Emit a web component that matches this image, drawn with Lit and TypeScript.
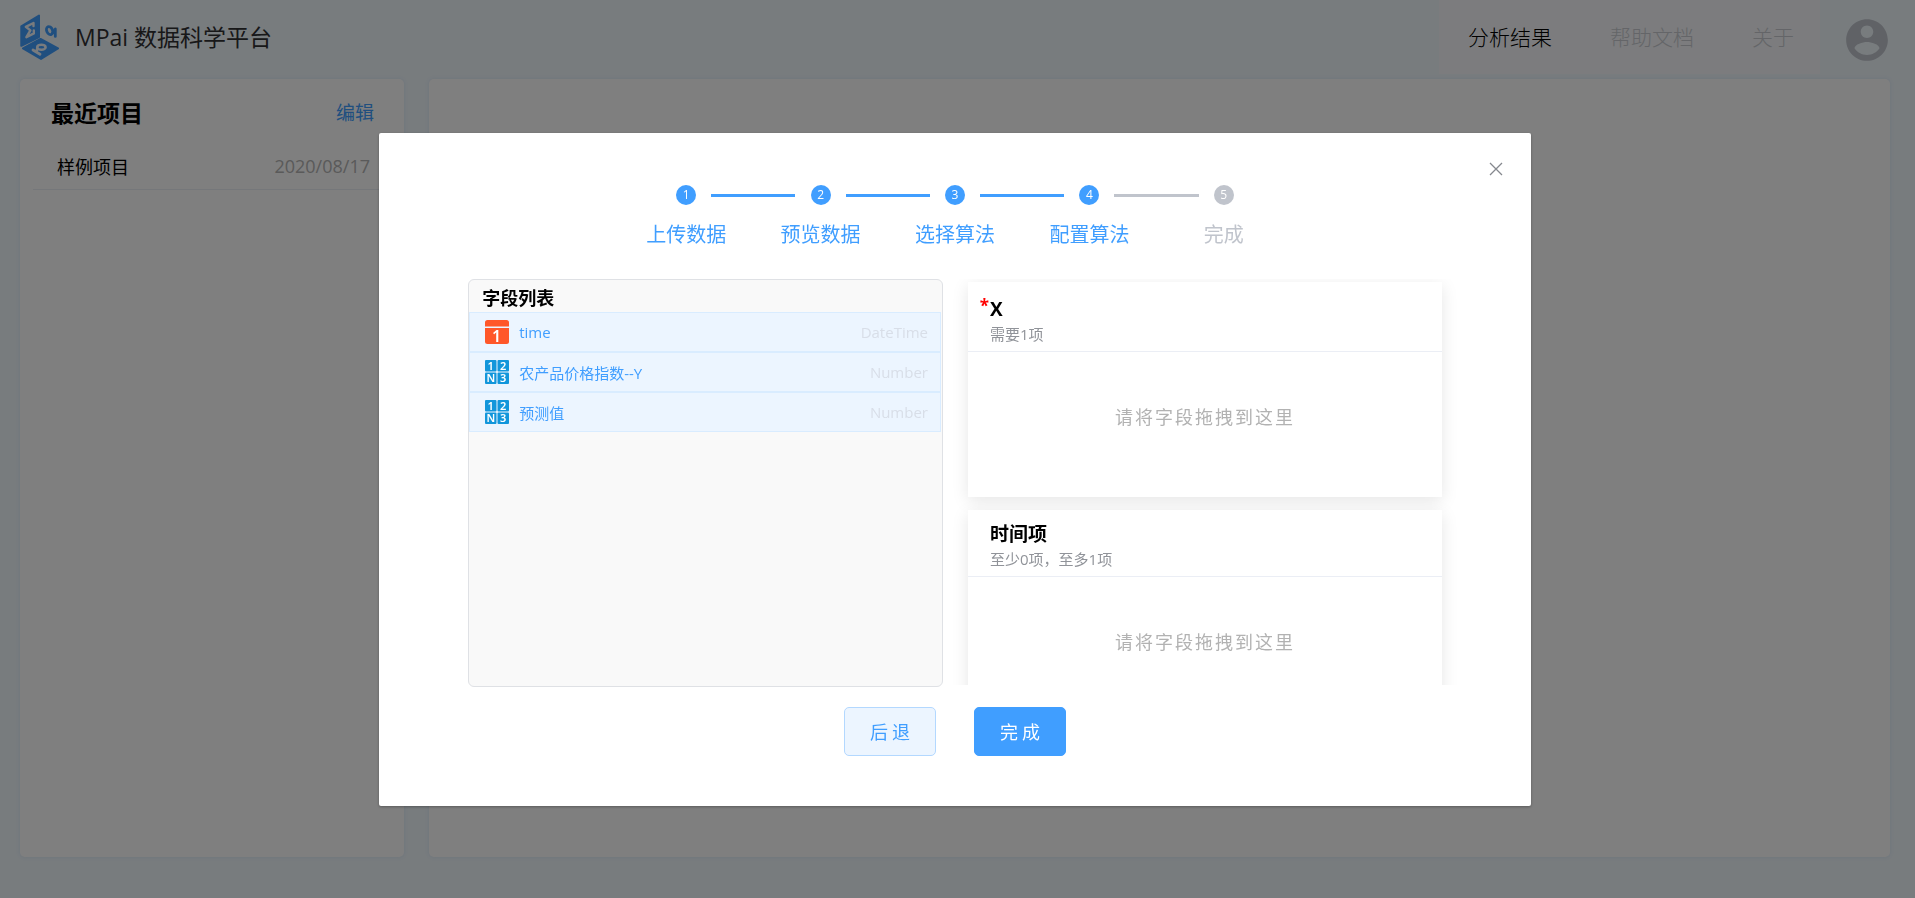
import { LitElement, html, svg, css } from "lit";
import { customElement, property, state } from "lit/decorators.js";

type FieldKind = "DateTime" | "Number";

interface Field {
  name: string;
  kind: FieldKind;
}

interface Slot {
  title: string;
  hint: string;
  required: boolean;
}

const STEPS = ["上传数据", "预览数据", "选择算法", "配置算法", "完成"];

const FIELDS: Field[] = [
  { name: "time", kind: "DateTime" },
  { name: "农产品价格指数--Y", kind: "Number" },
  { name: "预测值", kind: "Number" },
];

const SLOTS: Slot[] = [
  { title: "X", hint: "需要1项", required: true },
  { title: "时间项", hint: "至少0项，至多1项", required: false },
];

@customElement("brand-logo")
export class BrandLogo extends LitElement {
  static styles = css`
    :host {
      display: block;
      width: 40px;
      height: 46px;
    }
    .mark {
      display: block;
      width: 100%;
      height: 100%;
    }
  `;

  render() {
    return html`<svg class="mark" viewBox="0 0 40 46" aria-hidden="true">
      <g fill="#409eff" stroke="#409eff" stroke-width="2" stroke-linejoin="round">
        <path d="M1.3 12.3 L19 1.5 V23 L1.3 31.8 Z" />
        <path d="M3 34.5 L20.5 25 L38 34.5 L21 45 Z" />
      </g>
      <g fill="none" stroke="#f0f7fd" stroke-linecap="round" stroke-linejoin="round">
        <path stroke-width="2.4" d="M13.5 12 V9 L5.8 12.8 L10.4 16.4 L6.4 23.2 L13.8 19.4 V16.4" />
        <ellipse stroke-width="2.6" cx="21.4" cy="33.2" rx="4.2" ry="2.5" />
        <path stroke-width="2.8" d="M13 36 L20 40.2 M17.4 34.8 L16.4 37.6" />
      </g>
      <g fill="none" stroke="#409eff" stroke-width="2.8" stroke-linecap="round">
        <ellipse cx="29.6" cy="16.6" rx="2.9" ry="4.2" transform="rotate(-24 29.6 16.6)" />
        <path d="M32.6 19 L35.3 15 V22.4" stroke-linejoin="round" />
      </g>
    </svg>`;
  }
}

@customElement("field-icon")
export class FieldIcon extends LitElement {
  @property() kind: FieldKind = "Number";

  static styles = css`
    :host {
      display: block;
      width: 24px;
      height: 24px;
    }
    .glyph {
      display: block;
      overflow: visible;
      width: 100%;
      height: 100%;
      font-family: "Noto Sans", sans-serif;
      font-weight: 600;
      font-size: 11px;
      text-anchor: middle;
    }
    .day {
      font-size: 16px;
    }
  `;

  render() {
    if (this.kind === "DateTime") {
      return html`<svg class="glyph" viewBox="0 0 24 24" aria-hidden="true">
        <path fill="#ff5729" d="M2.5 0 H21.5 A2.5 2.5 0 0 1 24 2.5 V6.4 H0 V2.5 A2.5 2.5 0 0 1 2.5 0 Z" />
        <path fill="#ff5729" d="M0 8 H24 V21.5 A2.5 2.5 0 0 1 21.5 24 H2.5 A2.5 2.5 0 0 1 0 21.5 Z" />
        <text class="day" x="11.5" y="22" fill="#fff">1</text>
      </svg>`;
    }
    const cells: [number, number, string][] = [
      [0, 0, "1"],
      [12.5, 0, "2"],
      [0, 12.5, "N"],
      [12.5, 12.5, "3"],
    ];
    return html`<svg class="glyph" viewBox="0 0 24 24" aria-hidden="true">
      ${cells.map(
        ([x, y, label]) => svg`
          <rect x=${x} y=${y} width="11.5" height="11.5" rx="1" fill="#1296db" />
          <text x=${x + 5.75} y=${y + 9.6} fill="#fff">${label}</text>`
      )}
    </svg>`;
  }
}

@customElement("step-bar")
export class StepBar extends LitElement {
  @property({ type: Array }) steps: string[] = [];
  @property({ type: Number }) done = 0;

  static styles = css`
    :host {
      display: block;
    }
    .steps {
      display: grid;
      grid-auto-flow: column;
      grid-auto-columns: 1fr;
      margin: 0;
      padding: 0;
      list-style: none;
    }
    .step {
      display: grid;
      grid-template-columns: 1fr 20px 1fr;
      align-items: center;
      row-gap: 15px;
      color: #c0c4cc;
    }
    .done {
      color: #409eff;
    }
    .dot {
      grid-column: 2;
      display: flex;
      align-items: center;
      justify-content: center;
      height: 20px;
      border-radius: 50%;
      background: currentColor;
    }
    .number {
      color: #fff;
      font-size: 12px;
      line-height: 20px;
    }
    .tail {
      height: 3px;
      margin-left: 15px;
      margin-right: -42px;
      background: currentColor;
    }
    .label {
      grid-column: 1 / -1;
      font-size: 20px;
      line-height: 30px;
      text-align: center;
      white-space: nowrap;
    }
    .line {
      color: #c0c4cc;
    }
  `;

  render() {
    return html`<ol class="steps">
      ${this.steps.map(
        (label, i) => html`<li class="step ${i < this.done ? "done" : ""}">
          <span class="dot"><span class="number">${i + 1}</span></span>
          ${i < this.steps.length - 1
            ? html`<span class="tail ${i + 1 < this.done ? "" : "line"}"></span>`
            : ""}
          <span class="label">${label}</span>
        </li>`
      )}
    </ol>`;
  }
}

@customElement("drop-card")
export class DropCard extends LitElement {
  @property() heading = "";
  @property() hint = "";
  @property({ type: Boolean }) required = false;

  static styles = css`
    :host {
      display: block;
      background: #fff;
      box-shadow: 0 4px 16px rgba(0, 0, 0, 0.1);
    }
    .head {
      padding: 10px 22px 6px;
      border-bottom: 1px solid #ebeef5;
    }
    .title {
      position: relative;
      margin: 0;
      font-size: 19px;
      line-height: 28px;
      font-weight: 700;
      color: #000;
    }
    .required {
      padding-top: 3px;
    }
    .star {
      position: absolute;
      right: 100%;
      top: 0;
      padding-right: 1px;
      font-size: 17px;
      line-height: 28px;
      color: #f00;
    }
    .hint {
      margin: 0;
      font-size: 15px;
      line-height: 22px;
      color: #909399;
    }
    .body {
      height: 92px;
      padding-top: 53px;
      font-size: 18px;
      line-height: 24px;
      letter-spacing: 2px;
      text-align: center;
      color: #b2b2b2;
    }
  `;

  render() {
    return html`<section>
      <header class="head">
        <h3 class="title ${this.required ? "required" : ""}">
          ${this.required ? html`<span class="star">*</span>` : ""}${this.heading}
        </h3>
        <p class="hint">${this.hint}</p>
      </header>
      <div class="body">请将字段拖拽到这里</div>
    </section>`;
  }
}

@customElement("app-root")
export class AppRoot extends LitElement {
  @state() private open = true;

  static styles = css`
    :host {
      display: block;
      font-family: "Open Sans", "Noto Sans CJK SC", sans-serif;
      color: #000;
    }
    button {
      font-family: inherit;
      cursor: pointer;
    }
    a {
      text-decoration: none;
    }
    .page {
      box-sizing: border-box;
      display: flex;
      flex-direction: column;
      min-height: 100vh;
      padding: 0 25px 41px 20px;
      background: #f0f8fd;
    }
    .top {
      display: flex;
      align-items: center;
      height: 79px;
    }
    .brand {
      margin: 0 auto 5px 15px;
      font-size: 23px;
      line-height: 32px;
      font-weight: 400;
      color: #303133;
    }
    .logo {
      margin-bottom: 5px;
    }
    .menu {
      display: flex;
      align-items: center;
      align-self: flex-start;
      gap: 58px;
      height: 74px;
      margin-right: 22px;
      padding: 0 26px 0 29px;
      background: #f8f9fc;
      font-size: 21px;
      line-height: 32px;
      font-weight: 300;
    }
    .link {
      color: #000;
    }
    .muted {
      color: #c8cbd1;
    }
    .avatar {
      display: block;
      padding: 0;
      border: 0;
      background: none;
    }
    .avatar-icon {
      display: block;
      width: 50px;
      height: 50px;
      margin-right: -2px;
      fill: #c0c4cc;
    }
    .columns {
      flex: 1;
      display: grid;
      grid-template-columns: 384fr 1461fr;
      gap: 25px;
    }
    .card {
      border-radius: 5px;
      background: #fff;
      box-shadow: 0 0 4px rgba(64, 120, 200, 0.12);
    }
    .recent {
      padding: 16px 13px;
    }
    .recent-head {
      display: flex;
      align-items: center;
      justify-content: space-between;
      padding: 0 17px 0 18px;
    }
    .recent-title {
      margin: 0;
      font-size: 23px;
      line-height: 36px;
      font-weight: 700;
    }
    .edit {
      padding: 0;
      border: 0;
      background: none;
      font-size: 19px;
      line-height: 32px;
      color: #409eff;
    }
    .projects {
      margin: 12px 0 0;
      padding: 0;
      list-style: none;
    }
    .project {
      display: flex;
      align-items: center;
      justify-content: space-between;
      height: 46px;
      padding: 0 21px 0 24px;
      border-bottom: 1px solid #ebeef5;
      font-size: 18px;
    }
    .project-link {
      color: #000;
    }
    .date {
      color: #b4b4b4;
    }
    .overlay {
      position: fixed;
      inset: 0;
      display: flex;
      justify-content: center;
      align-items: flex-start;
      box-sizing: border-box;
      padding: 133px 5px 0 0;
      background: rgba(0, 0, 0, 0.5);
    }
    .dialog {
      box-sizing: border-box;
      width: 60.3%;
      padding: 27px 26px 50px;
      border-radius: 2px;
      background: #fff;
      box-shadow: 0 1px 3px rgba(0, 0, 0, 0.3);
    }
    .dialog-top {
      display: flex;
      justify-content: flex-end;
    }
    .close {
      display: block;
      padding: 2px;
      border: 0;
      background: none;
    }
    .close-icon {
      display: block;
      width: 14px;
      height: 14px;
    }
    .content {
      display: grid;
      padding: 7px 48px 0;
    }
    .progress {
      justify-self: center;
      width: 672px;
      max-width: 100%;
    }
    .work {
      display: grid;
      grid-template-columns: 475fr 504fr;
      gap: 10px;
      height: 408px;
      margin-top: 29px;
      padding-left: 15px;
    }
    .fields {
      display: flex;
      flex-direction: column;
      border: 1px solid #dfe1e5;
      border-radius: 6px;
      background: #f9f9f9;
    }
    .fields-title {
      margin: 0;
      padding: 4px 13px 0;
      font-size: 18px;
      line-height: 28px;
      font-weight: 700;
    }
    .field-list {
      margin: 0;
      padding: 0 1px 0 0;
      list-style: none;
    }
    .field {
      box-sizing: border-box;
      display: flex;
      align-items: center;
      gap: 10px;
      height: 40px;
      padding: 0 12px 0 15px;
      border: 1px solid #d9ecff;
      background: #ecf5ff;
      font-size: 15px;
      color: #409eff;
      cursor: move;
    }
    .kind {
      margin-left: auto;
      color: #d8dee8;
    }
    .slots {
      display: flex;
      flex-direction: column;
      gap: 13px;
      overflow: hidden;
      height: 403px;
      padding: 3px 15px 0;
    }
    .slot {
      flex: none;
    }
    .actions {
      display: flex;
      justify-content: center;
      gap: 38px;
      margin-top: 20px;
    }
    .button {
      box-sizing: border-box;
      height: 49px;
      padding: 0 21px 2px 25px;
      border: 1px solid #b3d8ff;
      border-radius: 5px;
      background: #ecf5ff;
      font-size: 18px;
      letter-spacing: 4px;
      color: #409eff;
    }
    .primary {
      border-color: #409eff;
      background: #409eff;
      color: #fff;
    }
  `;

  private close() {
    this.open = false;
  }

  private renderDialog() {
    return html`<div class="overlay">
      <div class="dialog" role="dialog" aria-modal="true" aria-label="配置算法">
        <div class="dialog-top">
          <button class="close" aria-label="关闭" @click=${this.close}>
            <svg class="close-icon" viewBox="0 0 14 14" fill="none" stroke="#85888e" stroke-width="1.3">
              <path d="M1 1 L13 13 M13 1 L1 13" />
            </svg>
          </button>
        </div>
        <div class="content">
          <step-bar class="progress" .steps=${STEPS} .done=${4}></step-bar>
          <div class="work">
            <section class="fields">
              <h2 class="fields-title">字段列表</h2>
              <ul class="field-list">
                ${FIELDS.map(
                  (f) => html`<li class="field" draggable="true">
                    <field-icon .kind=${f.kind}></field-icon>
                    <span>${f.name}</span>
                    <span class="kind">${f.kind}</span>
                  </li>`
                )}
              </ul>
            </section>
            <div class="slots">
              ${SLOTS.map(
                (s) => html`<drop-card
                  class="slot"
                  .heading=${s.title}
                  .hint=${s.hint}
                  .required=${s.required}
                ></drop-card>`
              )}
            </div>
          </div>
          <div class="actions">
            <button class="button">后退</button>
            <button class="button primary">完成</button>
          </div>
        </div>
      </div>
    </div>`;
  }

  render() {
    return html`<div class="page">
        <header class="top">
          <brand-logo class="logo"></brand-logo>
          <h1 class="brand">MPai 数据科学平台</h1>
          <nav class="menu">
            <a class="link" href="#results">分析结果</a>
            <a class="link muted" href="#docs">帮助文档</a>
            <a class="link muted" href="#about">关于</a>
          </nav>
          <button class="avatar" aria-label="用户">
            <svg class="avatar-icon" viewBox="0 0 24 24">
              <path
                d="M12 2C6.48 2 2 6.48 2 12s4.48 10 10 10 10-4.48 10-10S17.52 2 12 2zm0 3c1.66 0 3 1.34 3 3s-1.34 3-3 3-3-1.34-3-3 1.34-3 3-3zm0 14.2c-2.5 0-4.71-1.28-6-3.22.03-1.99 4-3.08 6-3.08 1.99 0 5.97 1.09 6 3.08-1.29 1.94-3.5 3.22-6 3.22z"
              />
            </svg>
          </button>
        </header>
        <main class="columns">
          <section class="card recent">
            <div class="recent-head">
              <h2 class="recent-title">最近项目</h2>
              <button class="edit">编辑</button>
            </div>
            <ul class="projects">
              <li class="project">
                <a class="project-link" href="#sample">样例项目</a>
                <time class="date" datetime="2020-08-17">2020/08/17</time>
              </li>
            </ul>
          </section>
          <section class="card"></section>
        </main>
      </div>
      ${this.open ? this.renderDialog() : ""}`;
  }
}
